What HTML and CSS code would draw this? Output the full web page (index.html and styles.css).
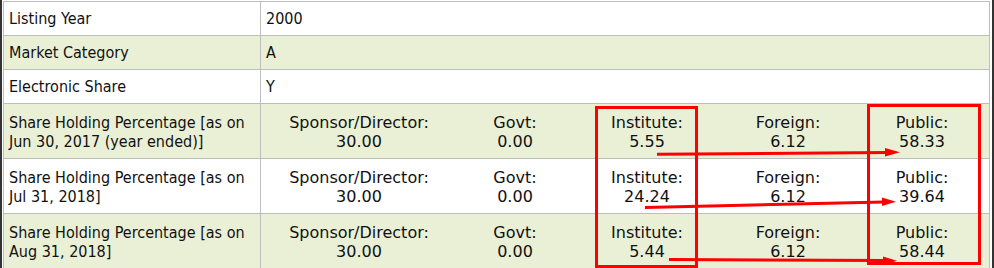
FILE: index.html
```html
<!DOCTYPE html>
<html lang="en">
<head>
<meta charset="utf-8">
<title>Company Details</title>
<link rel="stylesheet" href="styles.css">
</head>
<body>
<div class="frame">
  <div class="table">
    <div class="row">
      <div class="cell label">Listing Year</div>
      <div class="cell value">2000</div>
    </div>
    <div class="row alt">
      <div class="cell label">Market Category</div>
      <div class="cell value">A</div>
    </div>
    <div class="row">
      <div class="cell label">Electronic Share</div>
      <div class="cell value">Y</div>
    </div>
    <div class="row alt tall">
      <div class="cell label">Share Holding Percentage [as on Jun 30, 2017 (year ended)]</div>
      <div class="cell holdings">
        <div class="hold">Sponsor/Director:<br>30.00</div>
        <div class="hold">Govt:<br>0.00</div>
        <div class="hold">Institute:<br>5.55</div>
        <div class="hold">Foreign:<br>6.12</div>
        <div class="hold">Public:<br>58.33</div>
      </div>
    </div>
    <div class="row tall">
      <div class="cell label">Share Holding Percentage [as on Jul 31, 2018]</div>
      <div class="cell holdings">
        <div class="hold">Sponsor/Director:<br>30.00</div>
        <div class="hold">Govt:<br>0.00</div>
        <div class="hold">Institute:<br>24.24</div>
        <div class="hold">Foreign:<br>6.12</div>
        <div class="hold">Public:<br>39.64</div>
      </div>
    </div>
    <div class="row alt tall">
      <div class="cell label">Share Holding Percentage [as on Aug 31, 2018]</div>
      <div class="cell holdings">
        <div class="hold">Sponsor/Director:<br>30.00</div>
        <div class="hold">Govt:<br>0.00</div>
        <div class="hold">Institute:<br>5.44</div>
        <div class="hold">Foreign:<br>6.12</div>
        <div class="hold">Public:<br>58.44</div>
      </div>
    </div>
  </div>
  <svg class="marks" width="994" height="268" viewBox="0 0 994 268" aria-hidden="true">
    <g fill="none" stroke="#ff0000" stroke-width="3">
      <rect x="596.5" y="107.5" width="100" height="159"/>
      <rect x="868.5" y="105.5" width="111" height="158"/>
      <line x1="657" y1="154.3" x2="887" y2="152.4"/>
      <line x1="645" y1="207.5" x2="884" y2="202"/>
      <line x1="669" y1="259.5" x2="885" y2="260.5"/>
    </g>
    <g fill="#ff0000">
      <polygon points="900,152.2 885,148 885,156.6"/>
      <polygon points="896,201.7 882,197.5 882,206.1"/>
      <polygon points="897,260.7 883,256.4 883,265"/>
    </g>
  </svg>
</div>
</body>
</html>
```
FILE: styles.css
```css
html, body {
  margin: 0;
  padding: 0;
  overflow: hidden;
  background: #ffffff;
}

.frame {
  position: relative;
  width: 987px;
  min-height: 268px;
  padding: 1px 2px 0 1px;
  border-left: 2px solid #333333;
  border-right: 2px solid #333333;
  font-family: "DejaVu Sans", Verdana, sans-serif;
  font-size: 16px;
  line-height: 19px;
  color: #111111;
}

.table {
  border-top: 1px solid #bdbdbd;
  border-left: 1px solid #bdbdbd;
}

.row {
  display: grid;
  grid-template-columns: 257px 729px;
  background: #ffffff;
}

.row.alt {
  background: #eaf0d6;
}

.cell {
  border-right: 1px solid #bdbdbd;
  border-bottom: 1px solid #bdbdbd;
  padding: 7px 5px 7px 5px;
}

.label,
.value {
  font-family: "DejaVu Sans Condensed", "Liberation Sans", sans-serif;
  font-stretch: condensed;
  font-size: 16px;
}

.row.tall .cell {
  padding-top: 9px;
  padding-bottom: 7px;
}

.row.tall .label {
  padding-right: 4px;
}

.holdings {
  display: grid;
  grid-template-columns: 196px 116px 148px 134px 1fr;
}

.row.tall .holdings {
  padding-left: 0;
  padding-right: 0;
}

.hold {
  text-align: center;
}

.marks {
  position: absolute;
  left: -2px;
  top: 0;
  pointer-events: none;
}
```
